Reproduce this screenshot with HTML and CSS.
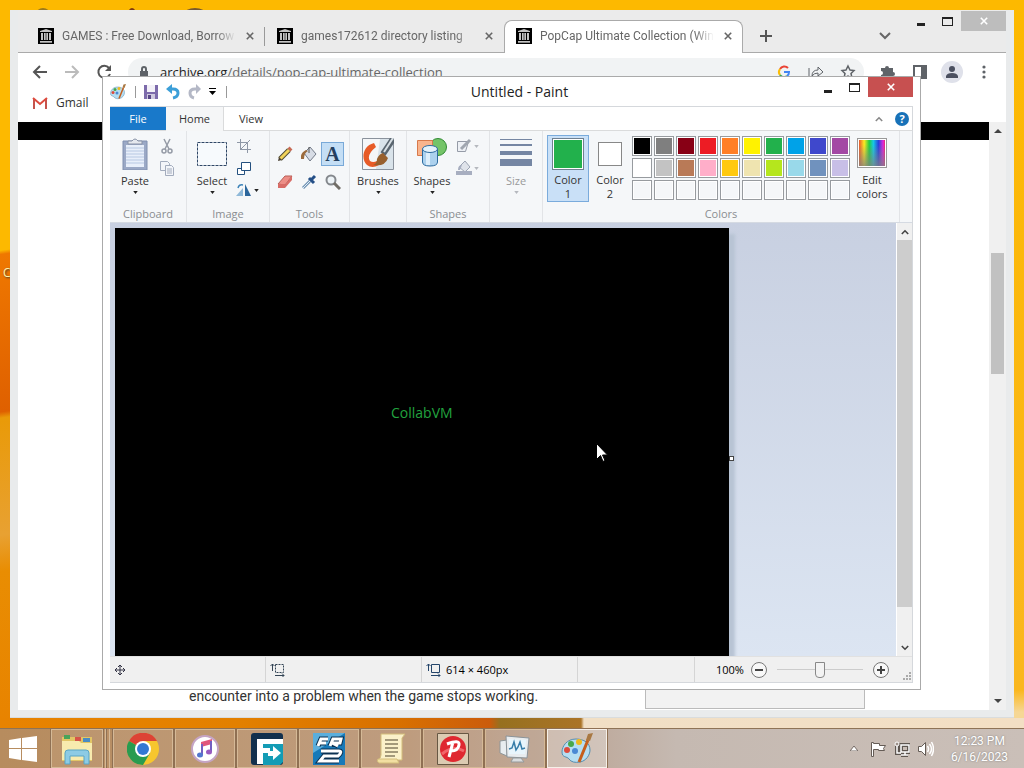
FILE: index.html
```html
<!DOCTYPE html>
<html lang="en">
<head>
    <meta charset="UTF-8">
    <meta name="viewport" content="width=device-width, initial-scale=1.0">
    <title>Desktop</title>
    <link rel="stylesheet" href="styles.css">
</head>
<body>
    <!-- Shared icons -->
    <svg class="sprite" aria-hidden="true">
        <symbol id="archive" viewBox="0 0 16 16">
            <path fill="#000" d="M0 0h16v16H0z"/>
            <path fill="#c4c4c4" d="M8 1l6 2v1H2V3zM2 13h12v1H2zM3 5h2v7H3zM6 5h1v7H6zM9 5h1v7H9zM11 5h2v7h-2z"/>
            <path fill="#888" d="M7 5h2v7H7zM2 14h12v1H2z"/>
        </symbol>
        <symbol id="cross" viewBox="0 0 10 10">
            <path d="M1 1l8 8M9 1L1 9" fill="none" stroke="currentColor" stroke-width="2"/>
        </symbol>
        <symbol id="palette" viewBox="0 0 32 32">
            <path fill="#b6def2" stroke="#568dae" d="M15 6C6 6 1 13 1 19c0 6 5 4 7 7s6 4 11 3c6-1 10-7 10-12 0-7-6-11-14-11z"/>
            <circle cx="6" cy="17" r="3" fill="#dd4a3b"/>
            <circle cx="10" cy="11" r="3" fill="#48a84a"/>
            <circle cx="18" cy="9" r="3" fill="#f0b91c"/>
            <circle cx="14" cy="18" r="3" fill="#4a89d4"/>
            <path d="M18 29L27 7" stroke="#c55e1c" stroke-width="3"/>
            <path d="M25 7l2-6 5-1-3 8z" fill="#a97842"/>
        </symbol>
        <symbol id="caret" viewBox="0 0 6 4"><path fill="currentColor" d="M0 0h6L3 4z"/></symbol>
        <symbol id="chevron" viewBox="0 0 10 7"><path d="M1 6l4-4 4 4" fill="none" stroke="currentColor" stroke-width="2"/></symbol>
    </svg>

    <div class="desktop">
        <main class="workspace">
            <span class="desktop-shape shape-one"></span>
            <span class="desktop-shape shape-two"></span>
            <span class="desktop-shape shape-three"></span>
            <span class="desktop-label">C</span>

            <!-- Browser window -->
            <section class="window browser">
                <div class="tab-strip">
                    <div class="tab">
                        <svg class="favicon"><use href="#archive"/></svg>
                        <a href="#" class="tab-title">GAMES : Free Download, Borrow</a>
                        <button class="tab-close" aria-label="Close tab"><svg><use href="#cross"/></svg></button>
                    </div>
                    <div class="tab">
                        <svg class="favicon"><use href="#archive"/></svg>
                        <a href="#" class="tab-title">games172612 directory listing</a>
                        <button class="tab-close" aria-label="Close tab"><svg><use href="#cross"/></svg></button>
                    </div>
                    <div class="tab active">
                        <svg class="favicon"><use href="#archive"/></svg>
                        <a href="#" class="tab-title">PopCap Ultimate Collection (Win</a>
                        <button class="tab-close" aria-label="Close tab"><svg><use href="#cross"/></svg></button>
                    </div>
                    <button class="new-tab" aria-label="New tab">
                        <svg width="14" height="14" viewBox="0 0 14 14"><path d="M7 1v12M1 7h12" stroke="#555" stroke-width="2"/></svg>
                    </button>
                    <button class="tab-search" aria-label="Search tabs">
                        <svg width="12" height="8" viewBox="0 0 12 8"><path d="M1 1l5 5 5-5" fill="none" stroke="#666" stroke-width="2"/></svg>
                    </button>
                    <div class="window-controls">
                        <button class="minimize" aria-label="Minimize"><i></i></button>
                        <button class="maximize" aria-label="Maximize"><i></i></button>
                        <button class="close" aria-label="Close"><svg><use href="#cross"/></svg></button>
                    </div>
                </div>

                <div class="toolbar">
                    <button aria-label="Back"><svg width="16" height="16" viewBox="0 0 16 16"><path d="M15 8H2M8 2L2 8l6 6" fill="none" stroke="#555" stroke-width="2"/></svg></button>
                    <button aria-label="Forward"><svg width="16" height="16" viewBox="0 0 16 16"><path d="M1 8h13M8 2l6 6-6 6" fill="none" stroke="#bbb" stroke-width="2"/></svg></button>
                    <button aria-label="Reload"><svg width="16" height="16" viewBox="0 0 16 16"><path d="M13 4a6 6 0 1 0 1 6" fill="none" stroke="#555" stroke-width="2"/><path d="M15 1v6H9z" fill="#555"/></svg></button>
                    <div class="address">
                        <svg width="16" height="16" viewBox="0 0 16 16"><path fill="#5f6368" d="M4 7h8v7H4z"/><path d="M6 7V5a2 2 0 0 1 4 0v2" fill="none" stroke="#5f6368" stroke-width="2"/></svg>
                        <a href="#" class="url"><b>archive.org</b>/details/pop-cap-ultimate-collection</a>
                        <button aria-label="Search with Google"><svg width="16" height="16" viewBox="0 0 16 16" fill="none" stroke-width="2"><path d="M12 4a5 5 0 0 0-8 1" stroke="#ea4335"/><path d="M4 5a5 5 0 0 0 0 6" stroke="#fbbc05"/><path d="M4 11a5 5 0 0 0 7 1" stroke="#34a853"/><path d="M8 8h5q0 3-2 4" stroke="#4285f4"/></svg></button>
                        <button aria-label="Share"><svg width="16" height="16" viewBox="0 0 16 16" fill="none" stroke="#5f6368"><path d="M1 4v10h9M4 12q0-6 6-6V3l5 5-5 4V9q-4 0-6 3z"/></svg></button>
                        <button aria-label="Bookmark"><svg width="16" height="16" viewBox="0 0 16 16"><path d="M8 2l2 4 4 .5-3 3 1 4.500L8 12l-4 2 1-4.500-3-3L6 6z" fill="none" stroke="#5f6368" stroke-width="1.500"/></svg></button>
                    </div>
                    <button aria-label="Extensions"><svg width="16" height="16" viewBox="0 0 16 16"><path fill="#5f6368" d="M1 4h4a2 2 0 1 1 4 0h4v4a2 2 0 1 1 0 4v3H9a2 2 0 1 0-4 0H1v-4a2 2 0 1 0 0-4z"/></svg></button>
                    <button aria-label="Side panel"><svg width="16" height="16" viewBox="0 0 16 16"><path d="M2 2h12v12H2z" fill="none" stroke="#5f6368" stroke-width="2"/><path fill="#5f6368" d="M9 2h5v12H9z"/></svg></button>
                    <button aria-label="Profile"><svg width="22" height="22" viewBox="0 0 22 22"><circle cx="11" cy="11" r="11" fill="#dfe1ea"/><circle cx="11" cy="8" r="3" fill="#4b5060"/><path fill="#4b5060" d="M5 17v-2q1-3 6-3t6 3v2z"/></svg></button>
                    <button aria-label="Menu"><svg width="4" height="14" viewBox="0 0 4 14" fill="#5f6368"><circle cx="2" cy="2" r="1.600"/><circle cx="2" cy="7" r="1.600"/><circle cx="2" cy="12" r="1.600"/></svg></button>
                </div>

                <div class="bookmarks">
                    <a href="#"><svg width="16" height="12" viewBox="0 0 16 12"><path d="M2 12V2" stroke="#c5534c" stroke-width="2"/><path d="M14 12V2" stroke="#c5534c" stroke-width="2"/><path d="M1 1l7 6 7-6" fill="none" stroke="#dd4b3e" stroke-width="2"/></svg>Gmail</a>
                </div>

                <div class="viewport">
                    <article class="page">
                        <div class="page-header"></div>
                        <div class="page-bottom">
                            <p>encounter into a problem when the game stops working.</p>
                            <div class="page-card"></div>
                        </div>
                    </article>
                    <div class="page-scroll">
                        <svg width="8" height="4" viewBox="0 0 8 4"><path fill="#444" d="M0 4h8L4 0z"/></svg>
                        <div class="page-thumb"></div>
                        <svg width="8" height="4" viewBox="0 0 8 4"><path fill="#444" d="M0 0h8L4 4z"/></svg>
                    </div>
                </div>
            </section>

            <!-- Paint window -->
            <section class="window paint">
                <header class="title-bar">
                    <div class="quick-access">
                        <svg width="16" height="16"><use href="#palette"/></svg>
                        <span class="divider"></span>
                        <button aria-label="Save"><svg width="16" height="16" viewBox="0 0 16 16"><path fill="#7d6bab" d="M1 1h14v14H1z"/><path fill="#f3f1f8" d="M4 1h8v7H4z"/><path fill="#cfc9de" d="M4 10h8v5H4z"/><path fill="#584786" d="M5 11h3v4H5z"/></svg></button>
                        <button aria-label="Undo"><svg width="16" height="16" viewBox="0 0 16 16"><path d="M4 5h4q5 0 5 4 0 4-5 5" fill="none" stroke="#3c9fd8" stroke-width="3"/><path fill="#3c9fd8" d="M7 0v10L1 5z"/></svg></button>
                        <button aria-label="Redo"><svg width="16" height="16" viewBox="0 0 16 16"><path d="M11 5H8Q3 5 3 9q0 4 4 5" fill="none" stroke="#b4b8c6" stroke-width="3"/><path fill="#b4b8c6" d="M9 0v10l5-5z"/></svg></button>
                        <button aria-label="Customize toolbar"><svg width="8" height="7" viewBox="0 0 8 7"><path d="M0 0h7v1H0zM0 3h7L3.500 7z"/></svg></button>
                        <span class="divider"></span>
                    </div>
                    <h1>Untitled - Paint</h1>
                    <div class="window-controls">
                        <button class="minimize" aria-label="Minimize"><i></i></button>
                        <button class="maximize" aria-label="Maximize"><i></i></button>
                        <button class="close" aria-label="Close"><svg><use href="#cross"/></svg></button>
                    </div>
                </header>

                <div class="paint-body">
                    <nav class="ribbon-tabs">
                        <button class="file">File</button>
                        <button class="selected">Home</button>
                        <button>View</button>
                        <div class="ribbon-help">
                            <button aria-label="Collapse ribbon"><svg class="chevron"><use href="#chevron"/></svg></button>
                            <button class="help" aria-label="Help">?</button>
                        </div>
                    </nav>

                    <div class="ribbon">
                        <div class="group clipboard">
                            <div class="group-tools">
                                <button class="large">
                                    <svg viewBox="0 0 32 32"><path fill="#9ba9c6" stroke="#8090b0" d="M4 3h24v29H4z"/><path fill="#e8effa" d="M7 7h18v22H7z"/><path d="M7 10h18M7 13h18M7 16h18M7 19h18M7 22h18M7 25h18" stroke="#b7c8e2"/><path fill="#e5e8ee" stroke="#8892a6" d="M9 6V3h4q3-4 6 0h4v3z"/></svg>
                                    Paste
                                    <svg class="caret"><use href="#caret"/></svg>
                                </button>
                                <div class="small-tools">
                                    <button aria-label="Cut"><svg viewBox="0 0 16 16" fill="none" stroke="#959ba6" stroke-width="1.500"><path d="M5 1l5 10M11 1L6 11"/><circle cx="5" cy="13" r="2"/><circle cx="11" cy="13" r="2"/></svg></button>
                                    <button aria-label="Copy"><svg viewBox="0 0 16 16" fill="#f3f5f9" stroke="#a3acbd"><path d="M1.500 1.500h7l2 2v7h-9z"/><path d="M6.500 5.500h6l2 2v8h-8zM8 9h5M8 11h5M8 13h5"/></svg></button>
                                </div>
                            </div>
                            <h2>Clipboard</h2>
                        </div>

                        <div class="group image">
                            <div class="group-tools">
                                <button class="large">
                                    <svg viewBox="0 0 32 32"><path d="M1.500 4.500h29v23h-29z" fill="#f7fafd" stroke="#2f4666" stroke-dasharray="3 1"/></svg>
                                    Select
                                    <svg class="caret"><use href="#caret"/></svg>
                                </button>
                                <div class="small-tools">
                                    <button aria-label="Crop"><svg viewBox="0 0 16 16" fill="none" stroke="#8f98a7"><path d="M4.500 1v10.500H15M1 4.500h10.500V15M4 12L14 2"/></svg></button>
                                    <button aria-label="Resize"><svg viewBox="0 0 16 16" fill="#fff" stroke="#24507f"><path d="M1.500 8.500h7v6h-7z"/><path d="M5.500 2.500h9v8h-9z"/></svg></button>
                                    <button aria-label="Rotate"><svg viewBox="0 0 16 16"><path fill="#8fb9d9" d="M0 14h7V6z"/><path fill="#2b669c" d="M9 2l6 12H9z"/><path d="M2 6q1-4 5-3" fill="none" stroke="#3d83b8" stroke-width="1.500"/></svg><svg class="caret"><use href="#caret"/></svg></button>
                                </div>
                            </div>
                            <h2>Image</h2>
                        </div>

                        <div class="group tools">
                            <div class="tool-grid">
                                <button aria-label="Pencil"><svg viewBox="0 0 16 16"><path d="M3 13L12 4" stroke="#4e4b33" stroke-width="5"/><path d="M3 13L12 4" stroke="#f1d35a" stroke-width="3"/><path fill="#4a4033" d="M1 15l1-4 3 3z"/><path d="M12 4l2-2" stroke="#c86a54" stroke-width="4"/></svg></button>
                                <button aria-label="Fill"><svg viewBox="0 0 16 16"><path fill="#d7dce5" stroke="#737b88" d="M3 7l6-6 6 7-6 7z"/><path fill="#9c6b3c" d="M0 13q-1-6 5-9l2 1q-4 2-4 8z"/><path d="M8 1v6" stroke="#555"/></svg></button>
                                <button class="pressed" aria-label="Text">A</button>
                                <button aria-label="Eraser"><svg viewBox="0 0 16 16"><path fill="#ed8e87" stroke="#b75f57" d="M1 10L8 2h7l-7 9z"/><path fill="#d86c67" d="M1 10h7v4H1zM8 11l7-9v4l-7 8z"/></svg></button>
                                <button aria-label="Color picker"><svg viewBox="0 0 16 16"><path d="M2 14L9 7" stroke="#7294b5" stroke-width="3"/><path d="M2 14L9 7" stroke="#e1edf6"/><path d="M8 4l5 5M9 7l5-5" stroke="#244f87" stroke-width="3"/></svg></button>
                                <button aria-label="Magnifier"><svg viewBox="0 0 16 16"><circle cx="6" cy="6" r="4.500" fill="#edf3f7" stroke="#84888d" stroke-width="2"/><path d="M9 9l6 6" stroke="#716d67" stroke-width="3"/></svg></button>
                            </div>
                            <h2>Tools</h2>
                        </div>

                        <div class="group brushes">
                            <div class="group-tools">
                                <button class="large">
                                    <svg viewBox="0 0 32 32"><path fill="#f4f6f8" stroke="#8a929c" d="M.5.5h31v31H.5z"/><path fill="#d9e3ea" d="M18 1h13v30H14z"/><path fill="#e75b27" d="M12 5C0 8-1 22 5 27q5 4 12 0l-2-4q-4 2-7 0-4-6 6-14z"/><path d="M31 1L21 16" stroke="#59656f" stroke-width="6"/><path d="M31 0L22 14" stroke="#d7dfe4" stroke-width="2"/><path fill="#97602e" d="M11 27q4-1 4-6 2-5 6-6l5 5q-3 9-15 7z"/></svg>
                                    Brushes
                                    <svg class="caret"><use href="#caret"/></svg>
                                </button>
                            </div>
                        </div>

                        <div class="group shapes">
                            <div class="group-tools">
                                <button class="large">
                                    <svg viewBox="0 0 32 32"><circle cx="22" cy="9" r="8.500" fill="#74c468" stroke="#328b35"/><path fill="#f9b48d" stroke="#d7794b" d="M1.500 2.500h15v15h-15z"/><path fill="#acd1ee" stroke="#2d6b9f" d="M6.500 11v13q0 4 7.500 4t7.500-4V11z"/><path fill="#ddeefb" d="M10 13h4v14h-4z"/><ellipse cx="14" cy="11" rx="7.500" ry="3.500" fill="#e4f2fc" stroke="#2d6b9f"/></svg>
                                    Shapes
                                    <svg class="caret"><use href="#caret"/></svg>
                                </button>
                                <div class="small-tools disabled">
                                    <button aria-label="Outline"><svg viewBox="0 0 16 16"><path d="M1.500 3.500h11l-3 10h-8z" fill="#edf0f5" stroke="#959ba7"/><path d="M5 11l9-9" stroke="#a0a6b0" stroke-width="3"/></svg><svg class="caret"><use href="#caret"/></svg></button>
                                    <button aria-label="Shape fill"><svg viewBox="0 0 16 16"><path fill="#dfe3ea" stroke="#9ca4b3" d="M3 7l6-6 5 6-5 5z"/><path fill="#a7aec0" d="M0 11h16v4H0zM2 10q0-5 4-5l-2 5z"/></svg><svg class="caret"><use href="#caret"/></svg></button>
                                </div>
                            </div>
                            <h2>Shapes</h2>
                        </div>

                        <div class="group size">
                            <div class="group-tools disabled">
                                <button class="large" disabled>
                                    <svg viewBox="0 0 32 32" fill="#7586a3"><path d="M0 1h32v1H0zM0 6h32v2H0zM0 13h32v4H0zM0 21h32v7H0z"/></svg>
                                    Size
                                    <svg class="caret"><use href="#caret"/></svg>
                                </button>
                            </div>
                        </div>

                        <div class="group colors">
                            <div class="group-tools">
                                <button class="color-choice chosen"><span class="color-one"></span>Color<br>1</button>
                                <button class="color-choice"><span class="color-two"></span>Color<br>2</button>
                                <div class="swatches">
                                    <button class="black" aria-label="Black"></button>
                                    <button class="gray" aria-label="Gray"></button>
                                    <button class="dark-red" aria-label="Dark red"></button>
                                    <button class="red" aria-label="Red"></button>
                                    <button class="orange" aria-label="Orange"></button>
                                    <button class="yellow" aria-label="Yellow"></button>
                                    <button class="green" aria-label="Green"></button>
                                    <button class="turquoise" aria-label="Turquoise"></button>
                                    <button class="indigo" aria-label="Indigo"></button>
                                    <button class="purple" aria-label="Purple"></button>
                                    <button class="white" aria-label="White"></button>
                                    <button class="light-gray" aria-label="Light gray"></button>
                                    <button class="brown" aria-label="Brown"></button>
                                    <button class="rose" aria-label="Rose"></button>
                                    <button class="gold" aria-label="Gold"></button>
                                    <button class="light-yellow" aria-label="Light yellow"></button>
                                    <button class="lime" aria-label="Lime"></button>
                                    <button class="light-turquoise" aria-label="Light turquoise"></button>
                                    <button class="blue-gray" aria-label="Blue gray"></button>
                                    <button class="lavender" aria-label="Lavender"></button>
                                    <button aria-label="Custom 1"></button>
                                    <button aria-label="Custom 2"></button>
                                    <button aria-label="Custom 3"></button>
                                    <button aria-label="Custom 4"></button>
                                    <button aria-label="Custom 5"></button>
                                    <button aria-label="Custom 6"></button>
                                    <button aria-label="Custom 7"></button>
                                    <button aria-label="Custom 8"></button>
                                    <button aria-label="Custom 9"></button>
                                    <button aria-label="Custom 10"></button>
                                </div>
                                <button class="color-choice edit"><span class="spectrum"></span>Edit<br>colors</button>
                            </div>
                            <h2>Colors</h2>
                        </div>
                    </div>

                    <div class="canvas-area">
                        <div class="canvas-view">
                            <div class="canvas">CollabVM<span class="handle"></span></div>
                        </div>
                        <div class="canvas-scroll">
                            <button aria-label="Scroll up"><svg class="chevron"><use href="#chevron"/></svg></button>
                            <div class="canvas-thumb"></div>
                            <button aria-label="Scroll down"><svg class="chevron down"><use href="#chevron"/></svg></button>
                        </div>
                    </div>

                    <footer class="status-bar">
                        <div class="status-cell"><svg width="12" height="12" viewBox="0 0 12 12" fill="none" stroke="#334"><path d="M6 1v10M1 6h10M4 3l2-2 2 2M4 9l2 2 2-2M3 4L1 6l2 2M9 4l2 2-2 2"/></svg></div>
                        <div class="status-cell"><svg width="16" height="14" viewBox="0 0 16 14" fill="none" stroke="#345"><path d="M2.500 1v7M.5 3l2-2 2 2M5 12.500h9M12 10.500l2 2-2 2"/><path d="M5.500 1.500h8v8h-8z" stroke-dasharray="2 1"/></svg></div>
                        <div class="status-cell"><svg width="16" height="14" viewBox="0 0 16 14" fill="none" stroke="#24456a"><path d="M2.500 1v7M.5 3l2-2 2 2M5 12.500h9M12 10.500l2 2-2 2M5.500 1.500h8v8h-8z"/></svg>614 × 460px</div>
                        <div class="status-cell spare"></div>
                        <div class="zoom">
                            <label for="zoom">100%</label>
                            <button aria-label="Zoom out"><svg width="16" height="16" viewBox="0 0 16 16"><circle cx="8" cy="8" r="7.500" fill="#f8f8f8" stroke="#777"/><path d="M4 8h8" stroke="#444" stroke-width="2"/></svg></button>
                            <input type="range" id="zoom" min="0" max="100" value="50">
                            <button aria-label="Zoom in"><svg width="16" height="16" viewBox="0 0 16 16"><circle cx="8" cy="8" r="7.500" fill="#f8f8f8" stroke="#777"/><path d="M4 8h8M8 4v8" stroke="#444" stroke-width="2"/></svg></button>
                            <svg class="grip" width="8" height="8" viewBox="0 0 8 8" fill="#aaa"><path d="M6 0h2v2H6zM3 3h2v2H3zM6 3h2v2H6zM0 6h2v2H0zM3 6h2v2H3zM6 6h2v2H6z"/></svg>
                        </div>
                    </footer>
                </div>
            </section>

            <svg class="cursor" viewBox="0 0 12 19"><path fill="#fff" stroke="#000" d="M.5.500v16l4-4 2.500 6 2-1-2.500-5.500h5z"/></svg>
        </main>

        <!-- Taskbar -->
        <footer class="taskbar">
            <button class="start" aria-label="Start"><svg width="28" height="26" viewBox="0 0 28 26" fill="#fff"><path d="M0 4l12-2v10H0zM13 2l15-2v12H13zM0 13h12v11L0 22zM13 13h15v13l-15-2z"/></svg></button>
            <button class="task stacked" aria-label="File Explorer"><svg viewBox="0 0 32 32"><path fill="#e2c565" d="M1 4h30v24H1z"/><path fill="#48a45a" d="M3 2h6v4H3z"/><path fill="#d65448" d="M14 4h6v4h-6z"/><path fill="#4a8cc2" d="M22 5h7v4h-7z"/><path fill="#f8ebae" d="M1 8h17l2 2h11v17H1z"/><path fill="#8dcbe5" stroke="#59a5c5" d="M4 31V20q0-3 3-3h18q3 0 3 3v11h-5v-8H9v8z"/></svg></button>
            <button class="task" aria-label="Chrome"><svg viewBox="0 0 32 32"><circle cx="16" cy="16" r="16" fill="#f6c62e"/><path fill="#dd4335" d="M16 16L2 8a16 16 0 0 1 28 0H16z"/><path fill="#299b50" d="M16 16L2 8a16 16 0 0 0 14 24l7-12z"/><circle cx="16" cy="16" r="8" fill="#fff"/><circle cx="16" cy="16" r="6" fill="#3478d4"/></svg></button>
            <button class="task" aria-label="iTunes"><svg viewBox="0 0 32 32"><circle cx="16" cy="16" r="13" fill="#fff" stroke="#c5a4c4" stroke-width="2"/><path fill="#e0567b" d="M12 9l11-3v5l-11 3z"/><path d="M13 11v11M22 8v11" stroke="#745fc1" stroke-width="2"/><ellipse cx="11" cy="22" rx="3" ry="2.500" fill="#5277cf"/><ellipse cx="20" cy="19" rx="3" ry="2.500" fill="#995bc0"/></svg></button>
            <button class="task" aria-label="Flashpoint"><svg viewBox="0 0 32 32"><rect width="32" height="32" rx="3" fill="#12304d"/><path fill="#139cb5" d="M12 11h20v18l-3 3H12z"/><path fill="#fff" d="M6 6h26v5H12v4h7v5h-7v11H6z"/><path fill="#fff" d="M17 18h5v-5l8 7-8 7v-4h-5z"/></svg></button>
            <button class="task" aria-label="Platform Racing 2"><svg viewBox="0 0 32 32"><path fill="#1779b8" d="M0 0h32v32H0z"/><path fill="#5baedc" d="M0 0h32L0 20z"/><path fill="none" stroke="#0b3152" stroke-width="5" d="M5 13L8 6h7M6 10h7M17 13l3-7h8l-1 4h-8l6 3M8 18h18q3 0 1 3l-2 2H11l-4 5h19"/><path fill="none" stroke="#fff" stroke-width="3" d="M5 13L8 6h7M6 10h7M17 13l3-7h8l-1 4h-8l6 3M8 18h18q3 0 1 3l-2 2H11l-4 5h19"/></svg></button>
            <button class="task" aria-label="Script"><svg viewBox="0 0 32 32"><path fill="#fbf1c9" stroke="#d3bd7b" d="M6 1h24l-3 4v22H3q3-2 3-5z"/><path fill="#f2dfa2" stroke="#d3bd7b" d="M3 26h19l2 4H4q-3-2-1-4z"/><path d="M10 7h13M10 11h13M10 15h13M10 19h13M10 23h10" stroke="#887e62" stroke-width="1.500"/></svg></button>
            <button class="task" aria-label="Popcorn"><svg viewBox="0 0 32 32"><path fill="#dccbb2" stroke="#675844" d="M.5.500h31v31H.5z"/><circle cx="16" cy="16" r="13" fill="#df2830"/><path d="M5 21q11-9 22-3" stroke="#f1666a" stroke-width="3" fill="none"/><path d="M16 9l-4 15M10 11q13-5 12 1-1 6-8 6" stroke="#fff" stroke-width="3" fill="none"/></svg></button>
            <button class="task" aria-label="Resource Monitor"><svg viewBox="0 0 32 32"><path fill="#e8edf0" stroke="#8e9699" d="M1 8l7-1v16l-7-3z"/><path fill="#e8ecef" stroke="#8b9399" d="M7 3l23 2-2 20-20-1z"/><path fill="#e8f5fc" d="M10 6l17 1-1 14H10z"/><path d="M10 16l3-1 2-6 2 8 2-3 2-5 2 7 3-1" fill="none" stroke="#377da9" stroke-width="1.500"/><path fill="#d9dcde" stroke="#94999b" d="M14 25h8l3 4H12z"/></svg></button>
            <button class="task current" aria-label="Paint"><svg><use href="#palette"/></svg></button>
            <div class="tray">
                <button aria-label="Show hidden icons"><svg width="8" height="5" viewBox="0 0 8 5"><path fill="#fff" stroke="#756b65" d="M0 5h8L4 0z"/></svg></button>
                <button aria-label="Action Center"><svg width="16" height="16" viewBox="0 0 16 16"><path fill="#fff" stroke="#655c56" d="M1.500 1.500h2v1h6v2h6l-2 3 1 2h-6v-1h-5v7h-2z"/></svg></button>
                <button aria-label="Network"><svg width="16" height="16" viewBox="0 0 16 16" fill="none"><path stroke="#5f5751" stroke-width="4" d="M7 4h8v7H7zM7 14h7M11 11v3M3 4v8h4"/><path d="M7 4h8v7H7zM7 14h7M11 11v3M3 4v8h4" stroke="#fff" stroke-width="1.500"/><circle cx="3" cy="3" r="2" fill="#9d918a" stroke="#fff"/></svg></button>
                <button aria-label="Volume"><svg width="16" height="16" viewBox="0 0 16 16"><path fill="#fff" stroke="#655c56" d="M.5 5.500h3l4-4v13l-4-4h-3z"/><path d="M9.500 5q2 3 0 6M11.500 3q4 5 0 10M13.500 1q4 7 0 14" fill="none" stroke="#fff" stroke-width="1.500"/></svg></button>
                <time class="clock" datetime="2023-06-16T12:23">12:23 PM<br>6/16/2023</time>
            </div>
        </footer>
    </div>
</body>
</html>
```
FILE: styles.css
```css
/* General styles */
* {
    box-sizing: border-box;
}

body {
    margin: 0;
    font-family: "Open Sans", "Noto Sans", sans-serif;
    font-size: 12px;
    line-height: 16px;
    color: #333;
}

button {
    display: flex;
    align-items: center;
    justify-content: center;
    margin: 0;
    padding: 0;
    border: none;
    background: none;
    color: inherit;
    font: inherit;
}

button svg {
    flex: none;
}

a {
    color: inherit;
    text-decoration: none;
}

h1, h2, p {
    margin: 0;
    font-weight: normal;
}

.sprite {
    position: absolute;
    width: 0;
    height: 0;
}

.desktop {
    display: flex;
    flex-direction: column;
    height: 100vh;
    overflow: hidden;
    background-color: #fdb900;
}

/* Wallpaper shows round the edges of the browser */
.workspace {
    position: relative;
    flex: 1;
    background-image:
        linear-gradient(to right, #e88300 0, #e38000 240px, #d87000 400px, #cb5c0c 490px, #96701f 500px, #ab7427 581px, #f1dfc5 584px, #f3dfc4 100%),
        linear-gradient(172deg, #fdb900 248px, #ef7800 252px, #df6000 408px, #e99a08 414px, #e8a132 530px, #e98d02 566px, #e88300 718px),
        linear-gradient(#fdb900, #fab71e 690px, #f6d795 712px);
    background-position: left bottom, left top, right top;
    background-size: 100% 10px, 10px 100%, 10px 100%;
    background-repeat: no-repeat;
}

.desktop-shape {
    position: absolute;
    top: 8px;
    height: 12px;
    border-radius: 50%;
}

.shape-one {
    left: 36px;
    width: 14px;
    background-color: #9b7a1c;
}

.shape-two {
    left: 128px;
    width: 8px;
    background-color: #7d3b12;
}

.shape-three {
    left: 184px;
    width: 22px;
    background-color: #77592e;
}

.desktop-label {
    position: absolute;
    left: 3px;
    top: 265px;
    color: #fdf3b0;
    text-shadow: 1px 1px 2px #333;
}

/* Windows */
.window {
    position: absolute;
    display: flex;
    flex-direction: column;
}

.window-controls {
    display: flex;
    align-items: flex-start;
}

.window-controls button {
    width: 27px;
    height: 20px;
}

.minimize i {
    width: 8px;
    height: 3px;
    margin-top: 6px;
    background-color: #222;
}

.maximize i {
    width: 11px;
    height: 9px;
    border: 1px solid #222;
    border-top-width: 2px;
}

.window-controls .close {
    width: 45px;
    color: white;
}

.window-controls .close svg {
    width: 8px;
    height: 8px;
}

/* Browser */
.browser {
    top: 10px;
    right: 10px;
    bottom: 10px;
    left: 10px;
    padding: 0 8px 7px;
    border-bottom: 1px solid #d9dcdd;
    background-color: #e9ebec;
}

.tab-strip {
    display: flex;
    height: 43px;
    padding: 1px 0 0 8px;
    border-bottom: 1px solid #aaa;
    background-color: #ebebeb;
}

.tab {
    display: flex;
    align-items: center;
    flex: 0 1 239px;
    min-width: 0;
    height: 33px;
    margin-top: 9px;
    padding: 0 11px 2px 12px;
    color: #666;
}

.tab:first-child {
    background: linear-gradient(#999, #999) right 7px / 1px 19px no-repeat;
}

.tab.active {
    border: 1px solid #aaa;
    border-bottom: none;
    border-radius: 8px 8px 0 0;
    background-color: white;
    padding-left: 11px;
    padding-right: 10px;
}

.favicon {
    flex: none;
    width: 16px;
    height: 16px;
    margin-right: 8px;
}

.tab-title {
    flex: 1;
    overflow: hidden;
    font-family: Roboto, sans-serif;
    white-space: nowrap;
    mask-image: linear-gradient(to left, transparent, black 20px);
}

.tab-close {
    flex: none;
    width: 8px;
    height: 8px;
    margin-left: 10px;
    color: #666;
}

.tab-close svg {
    width: 8px;
    height: 8px;
}

.new-tab {
    width: 30px;
    margin: 8px 0 0 8px;
    height: 33px;
}

.tab-search {
    width: 30px;
    height: 33px;
    margin: 8px 7px 0 auto;
}

.browser .close {
    background-color: #bdbdbd;
}

.toolbar {
    display: flex;
    align-items: center;
    gap: 16px;
    height: 37px;
    padding: 0 14px;
    background-color: white;
}

.toolbar > button {
    width: 16px;
}

.address {
    display: flex;
    flex: 1;
    align-items: center;
    gap: 16px;
    height: 28px;
    padding: 0 8px;
    border-radius: 14px;
    background-color: #f1f3f4;
}

.url {
    flex: 1;
    margin-left: -8px;
    font-size: 13px;
    color: #666;
}

.url b {
    font-weight: normal;
    color: #222;
}

.bookmarks {
    height: 32px;
    padding: 5px 14px;
    background-color: white;
}

.bookmarks a {
    display: flex;
    align-items: center;
    gap: 8px;
}

.viewport {
    display: flex;
    flex: 1;
    min-height: 0;
}

.page {
    display: flex;
    flex: 1;
    flex-direction: column;
    background-color: white;
}

.page-header {
    height: 18px;
    background-color: black;
}

.page-bottom {
    display: flex;
    align-items: flex-end;
    margin-top: auto;
    padding: 0 124px 1px 171px;
}

.page-bottom p {
    flex: 1;
    padding-bottom: 3px;
    font-family: Roboto, "Liberation Sans", sans-serif;
    font-size: 14px;
    line-height: 20px;
}

.page-card {
    width: 220px;
    height: 60px;
    border: 1px solid #bbb;
    border-top: none;
    background-color: #f2f2f2;
}

.page-scroll {
    display: flex;
    flex-direction: column;
    align-items: center;
    width: 17px;
    padding: 7px 2px;
    background-color: #f0f0f0;
}

.page-thumb {
    width: 13px;
    height: 121px;
    margin: 120px 0 auto;
    background-color: #c1c1c1;
}

/* Paint */
.paint {
    top: 76px;
    right: 103px;
    bottom: 38px;
    left: 102px;
    padding: 0 7px 6px;
    border: 1px solid #aaa;
    background-color: white;
    font-size: 11px;
}

.title-bar {
    display: grid;
    grid-template-columns: 1fr auto 1fr;
    height: 29px;
}

.quick-access {
    display: flex;
    align-items: center;
    gap: 6px;
}

.quick-access .divider {
    width: 1px;
    height: 12px;
    margin: 0 1px 0 3px;
    background-color: #999;
}

.title-bar h1 {
    align-self: center;
    padding-left: 16px;
    font-size: 14px;
    line-height: 20px;
    color: #222;
}

.title-bar .window-controls {
    justify-content: flex-end;
}

.title-bar .minimize i {
    margin-top: 8px;
}

.title-bar .close {
    background-color: #c75050;
}

.paint-body {
    display: flex;
    flex: 1;
    flex-direction: column;
    min-height: 0;
    border: 1px solid #d5d8dc;
    border-left: none;
}

.ribbon-tabs {
    display: flex;
    height: 24px;
    border-bottom: 1px solid #dadbdc;
}

.ribbon-tabs > button {
    width: 54px;
    height: 24px;
}

.ribbon-tabs .file {
    width: 56px;
    height: 23px;
    background-color: #1979ca;
    color: white;
}

.ribbon-tabs .selected {
    width: 58px;
    border-right: 1px solid #dadbdc;
    background-color: #f5f6f7;
}

.ribbon-help {
    display: flex;
    align-items: center;
    gap: 12px;
    margin-left: auto;
    padding-right: 3px;
}

.chevron {
    width: 8px;
    height: 6px;
    color: #888;
}

.help {
    width: 14px;
    height: 14px;
    border-radius: 50%;
    background-color: #1872b8;
    color: white;
    font-weight: bold;
}

.ribbon {
    display: flex;
    flex: none;
    height: 92px;
    border-bottom: 1px solid #d5dae2;
    background-color: #f5f7f9;
}

.group {
    display: flex;
    flex: none;
    flex-direction: column;
    justify-content: space-between;
    padding-top: 4px;
    border-right: 1px solid #e2e4e7;
}

.group h2 {
    font-size: 11px;
    line-height: 16px;
    text-align: center;
    color: #8a8d91;
}

.group-tools {
    display: flex;
    justify-content: center;
    height: 67px;
}

.clipboard {
    width: 77px;
}

.image {
    width: 83px;
}

.clipboard .group-tools, .image .group-tools, .shapes .group-tools {
    justify-content: flex-start;
    padding-left: 1px;
}

.tools {
    width: 80px;
}

.brushes {
    width: 57px;
}

.shapes {
    width: 83px;
}

.size {
    width: 53px;
}

.colors {
    width: 357px;
}

.large {
    flex-direction: column;
    justify-content: flex-start;
    width: 48px;
    padding-top: 3px;
}

.large > svg:first-child {
    width: 32px;
    height: 32px;
    margin-bottom: 3px;
}

svg.caret {
    width: 5px;
    height: 3px;
    color: #222;
}

.large .caret {
    margin-top: 2px;
}

.small-tools {
    width: 24px;
}

.small-tools button {
    justify-content: flex-start;
    gap: 2px;
    height: 22px;
}

.small-tools svg:first-child {
    width: 16px;
    height: 16px;
}

.disabled .large {
    color: #999;
}

.disabled .caret {
    color: #b5b8be;
}

.tool-grid {
    display: grid;
    grid-template-columns: repeat(3, 24px);
    gap: 4px 0;
    padding: 7px 0 0 3px;
}

.tool-grid button {
    height: 24px;
}

.tool-grid svg {
    width: 16px;
    height: 16px;
}

.tool-grid .pressed {
    width: 23px;
    border: 1px solid #79a9d8;
    background-color: #c4def5;
    font-family: "Liberation Serif", serif;
    font-size: 20px;
    font-weight: bold;
    color: #243f60;
}

.colors .group-tools {
    justify-content: flex-start;
    padding-left: 4px;
}

.color-choice {
    flex-direction: column;
    justify-content: flex-start;
    width: 42px;
    padding-top: 3px;
    line-height: 14px;
}

.color-choice.chosen {
    border: 1px solid #7aabdc;
    background-color: #c9e0f7;
    padding-top: 2px;
}

.color-one {
    width: 32px;
    height: 32px;
    margin-bottom: 3px;
    border: 1px solid #708090;
    background-color: #22b14c;
    box-shadow: inset 0 0 0 1px white;
}

.color-two {
    width: 24px;
    height: 24px;
    margin: 4px 0 7px;
    border: 1px solid #888;
    background-color: white;
}

.swatches {
    display: grid;
    grid-template-columns: repeat(10, 20px);
    grid-auto-rows: 20px;
    gap: 2px;
    padding: 1px 0 0 1px;
}

.swatches button {
    border: 1px solid #979b9f;
    box-shadow: inset 0 0 0 1px white;
}

.color-choice.edit {
    margin-left: 1px;
}

.spectrum {
    width: 30px;
    height: 30px;
    margin-bottom: 5px;
    border: 1px solid #999;
    background: linear-gradient(rgba(128, 128, 128, 0) 20%, rgba(128, 128, 128, 0.8)), linear-gradient(to right, #e33a30, #ffea22 22%, #22cc42 40%, #16c9e5 55%, #2840dd 73%, #e128da 90%, #ee2430);
    box-shadow: inset 0 0 0 1px white;
}

.black { background-color: #000; }
.gray { background-color: #7f7f7f; }
.dark-red { background-color: #880015; }
.red { background-color: #ed1c24; }
.orange { background-color: #ff7f27; }
.yellow { background-color: #fff200; }
.green { background-color: #22b14c; }
.turquoise { background-color: #00a2e8; }
.indigo { background-color: #3f48cc; }
.purple { background-color: #a349a4; }
.white { background-color: #fff; }
.light-gray { background-color: #c3c3c3; }
.brown { background-color: #b97a57; }
.rose { background-color: #ffaec9; }
.gold { background-color: #ffc90e; }
.light-yellow { background-color: #efe4b0; }
.lime { background-color: #b5e61d; }
.light-turquoise { background-color: #99d9ea; }
.blue-gray { background-color: #7092be; }
.lavender { background-color: #c8bfe7; }

.canvas-area {
    display: flex;
    flex: 1;
    min-height: 0;
}

.canvas-view {
    flex: 1;
    min-width: 0;
    padding: 5px;
    overflow: hidden;
    background: linear-gradient(#c8d0e1, #dce5f2);
}

/* The picture being edited is 614 by 460 */
.canvas {
    position: relative;
    width: 614px;
    height: 460px;
    padding: 177px 0 0 276px;
    background-color: black;
    box-shadow: 6px 6px 3px #b8c4d4;
    color: #22a33f;
    font-size: 14px;
}

.handle {
    position: absolute;
    right: -5px;
    top: 228px;
    width: 5px;
    height: 5px;
    border: 1px solid #444;
    background-color: white;
}

.canvas-scroll {
    display: flex;
    flex-direction: column;
    width: 16px;
    border-left: 1px solid white;
    background-color: #f0f0f0;
}

.canvas-scroll button {
    height: 17px;
}

.canvas-scroll .chevron {
    color: #444;
}

.canvas-thumb {
    flex: 1;
    margin-bottom: 32px;
    background-color: #cdcdcd;
}

.down {
    transform: rotate(180deg);
}

.status-bar {
    display: flex;
    flex: none;
    height: 26px;
    border-top: 1px solid #e1e1e1;
    background-color: #f0f0f0;
    color: black;
}

.status-cell {
    display: flex;
    flex: 0 1 156px;
    align-items: center;
    gap: 4px;
    padding-left: 4px;
    border-right: 1px solid #d5d5d5;
    white-space: nowrap;
}

.status-cell.spare {
    flex: 1;
}

.zoom {
    display: flex;
    align-items: center;
    gap: 7px;
    width: 217px;
    padding-left: 21px;
}

.zoom input {
    width: 86px;
    height: 18px;
    margin: 0 3px;
    appearance: none;
    background: linear-gradient(#ccc, #ccc) center / 100% 1px no-repeat;
}

.zoom input::-webkit-slider-thumb {
    appearance: none;
    width: 10px;
    height: 16px;
    border: 1px solid #888;
    border-radius: 0 0 4px 4px;
    background-color: #f3f3f3;
}

.grip {
    align-self: flex-end;
    margin: 0 1px 2px auto;
}

.cursor {
    position: absolute;
    left: 596px;
    top: 443px;
    width: 12px;
    height: 19px;
}

/* Taskbar */
.taskbar {
    display: flex;
    flex: none;
    height: 40px;
    border-top: 1px solid #8e7356;
    background: linear-gradient(to right, #b78c5e, #b99474 40%, #baa291 54%, #c5b9b1 66%, #cabfb8);
}

.start {
    width: 50px;
    padding-right: 4px;
}

.task {
    width: 60px;
    margin-left: 2px;
    border: 1px solid #d5b997;
    outline: 1px solid #8f7053;
    background-color: rgba(255, 255, 255, 0.08);
}

.task svg {
    width: 32px;
    height: 32px;
}

.task.stacked {
    width: 52px;
    margin: 0 8px 0 1px;
    box-shadow: 2px 0 #bb9167, 3px 0 #d5b997, 4px 0 #8f7053, 6px 0 #bb9167, 7px 0 #d5b997;
}

.task.current {
    border-color: #f6f0e9;
    background-color: rgba(255, 255, 255, 0.3);
}

.tray {
    display: flex;
    align-items: center;
    gap: 8px;
    margin-left: auto;
    padding-right: 16px;
    color: white;
}

.tray > button:first-child {
    margin-right: 4px;
}

.clock {
    margin-left: 9px;
    font-family: Roboto, sans-serif;
    text-align: center;
    text-shadow: 0 0 2px #777;
}
```
